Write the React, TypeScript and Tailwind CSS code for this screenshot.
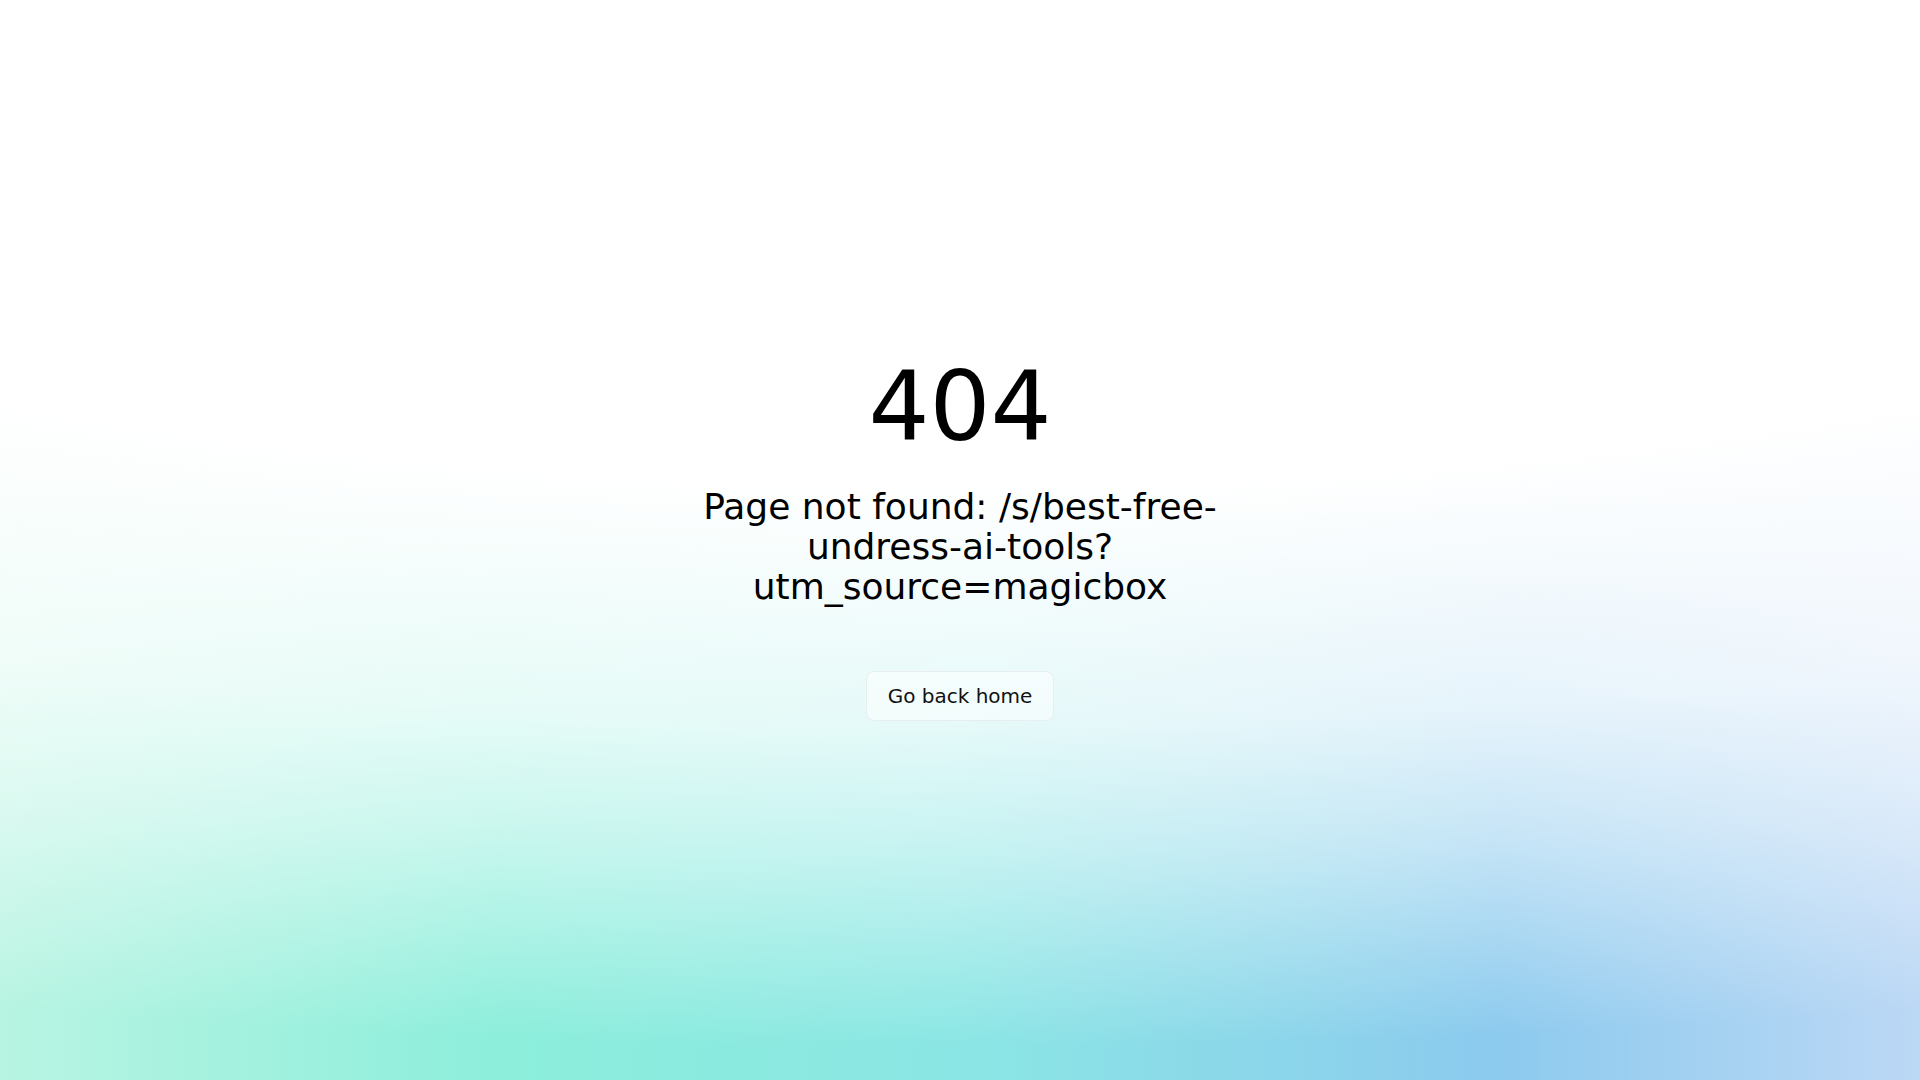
export default function App() {
  return (
    <div
      className="flex min-h-screen w-full flex-col items-center justify-center px-4 text-center text-black [background-image:radial-gradient(ellipse_192%_100%_at_50%_0%,rgba(255,255,255,1)_45%,rgba(255,255,255,0.78)_67%,rgba(255,255,255,0.5)_79%,rgba(255,255,255,0)_97%),linear-gradient(to_right,#b8f4e2_0%,#8ceedb_26%,#8ae6e4_50%,#8ccaee_78%,#bcd8f5_100%)]"
      style={{ fontFamily: '"DejaVu Sans", Verdana, sans-serif' }}
    >
      <h1 className="text-[96px] leading-none font-normal">404</h1>
      <p className="mt-8 max-w-xl text-4xl font-normal">
        Page not found: /s/best-free-undress-ai-tools?utm_source=magicbox
      </p>
      <a
        href="#"
        className="mt-16 rounded-lg border border-[#e6eef0] bg-white/50 px-[21px] py-2.5 text-xl text-[#111]"
      >
        Go back home
      </a>
    </div>
  );
}
